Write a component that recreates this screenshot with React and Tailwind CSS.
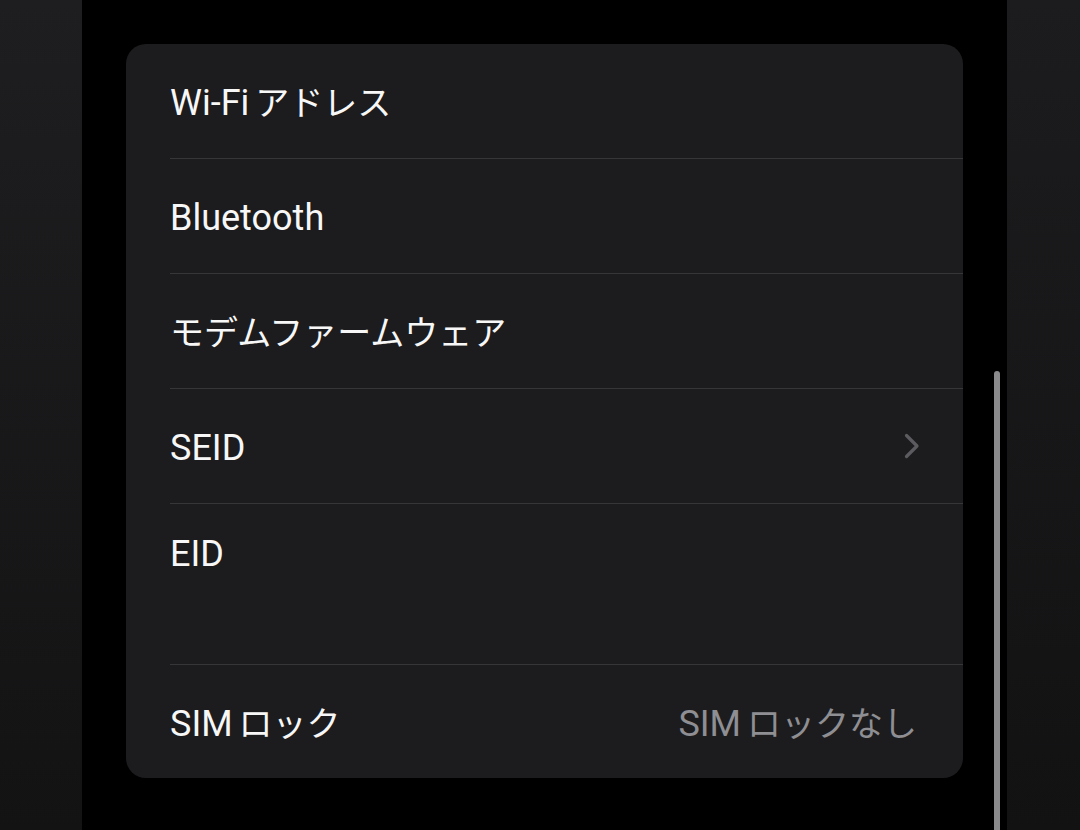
import React from "react";

const JA = ({ children, gap = false }) => (
  <span className={`text-[34px] ${gap ? "ml-[6px]" : ""}`}>{children}</span>
);

function Row({ children, right, chevron, h = "h-[114px]", divider = true, top = false }) {
  return (
    <div className="flex flex-col">
      <div
        className={`${h} flex ${top ? "items-start pt-[28px]" : "items-center"} pl-[44px] pr-[44px] justify-between`}
      >
        <div className={`text-[36px] leading-[44px] text-[#f7f7f7] ${top ? "" : "mt-[4px]"}`}>
          {children}
        </div>
        {right && (
          <div className="text-[36px] leading-[44px] text-[#8e8e93] pr-[2px] mt-[4px]">{right}</div>
        )}
        {chevron && (
          <svg width="16" height="26" viewBox="0 0 16 26" className="mr-[-1px]">
            <polyline
              points="2.5,2.5 13,13 2.5,23.5"
              fill="none"
              stroke="#5c5c60"
              strokeWidth="3.2"
              strokeLinecap="round"
              strokeLinejoin="round"
            />
          </svg>
        )}
      </div>
      {divider && <div className="ml-[44px] h-px bg-[#363638]" />}
    </div>
  );
}

export default function App() {
  return (
    <div
      className="w-[1080px] h-[830px] flex bg-black overflow-hidden"
      style={{ fontFamily: "Roboto, 'Noto Sans CJK JP', sans-serif" }}
    >
      <div className="w-[82px] h-full bg-gradient-to-b from-[#1e1e20] to-[#131314]" />
      <div className="relative flex-1 h-full bg-black pl-[44px] pr-[44px] pt-[44px]">
        <div className="bg-[#1c1c1e] rounded-[20px] overflow-hidden">
          <Row>
            Wi-Fi<JA gap>アドレス</JA>
          </Row>
          <Row>Bluetooth</Row>
          <Row>
            <JA>モデムファームウェア</JA>
          </Row>
          <Row chevron>SEID</Row>
          <Row h="h-[160px]" top>
            EID
          </Row>
          <Row
            h="h-[113px]"
            divider={false}
            right={
              <>
                SIM<JA gap>ロックなし</JA>
              </>
            }
          >
            SIM<JA gap>ロック</JA>
          </Row>
        </div>
        <div className="absolute left-[912px] top-[371px] w-[6px] h-[480px] rounded-full bg-[#8a8a8c]" />
      </div>
      <div className="w-[73px] h-full bg-gradient-to-b from-[#1c1c1e] to-[#121213]" />
    </div>
  );
}
